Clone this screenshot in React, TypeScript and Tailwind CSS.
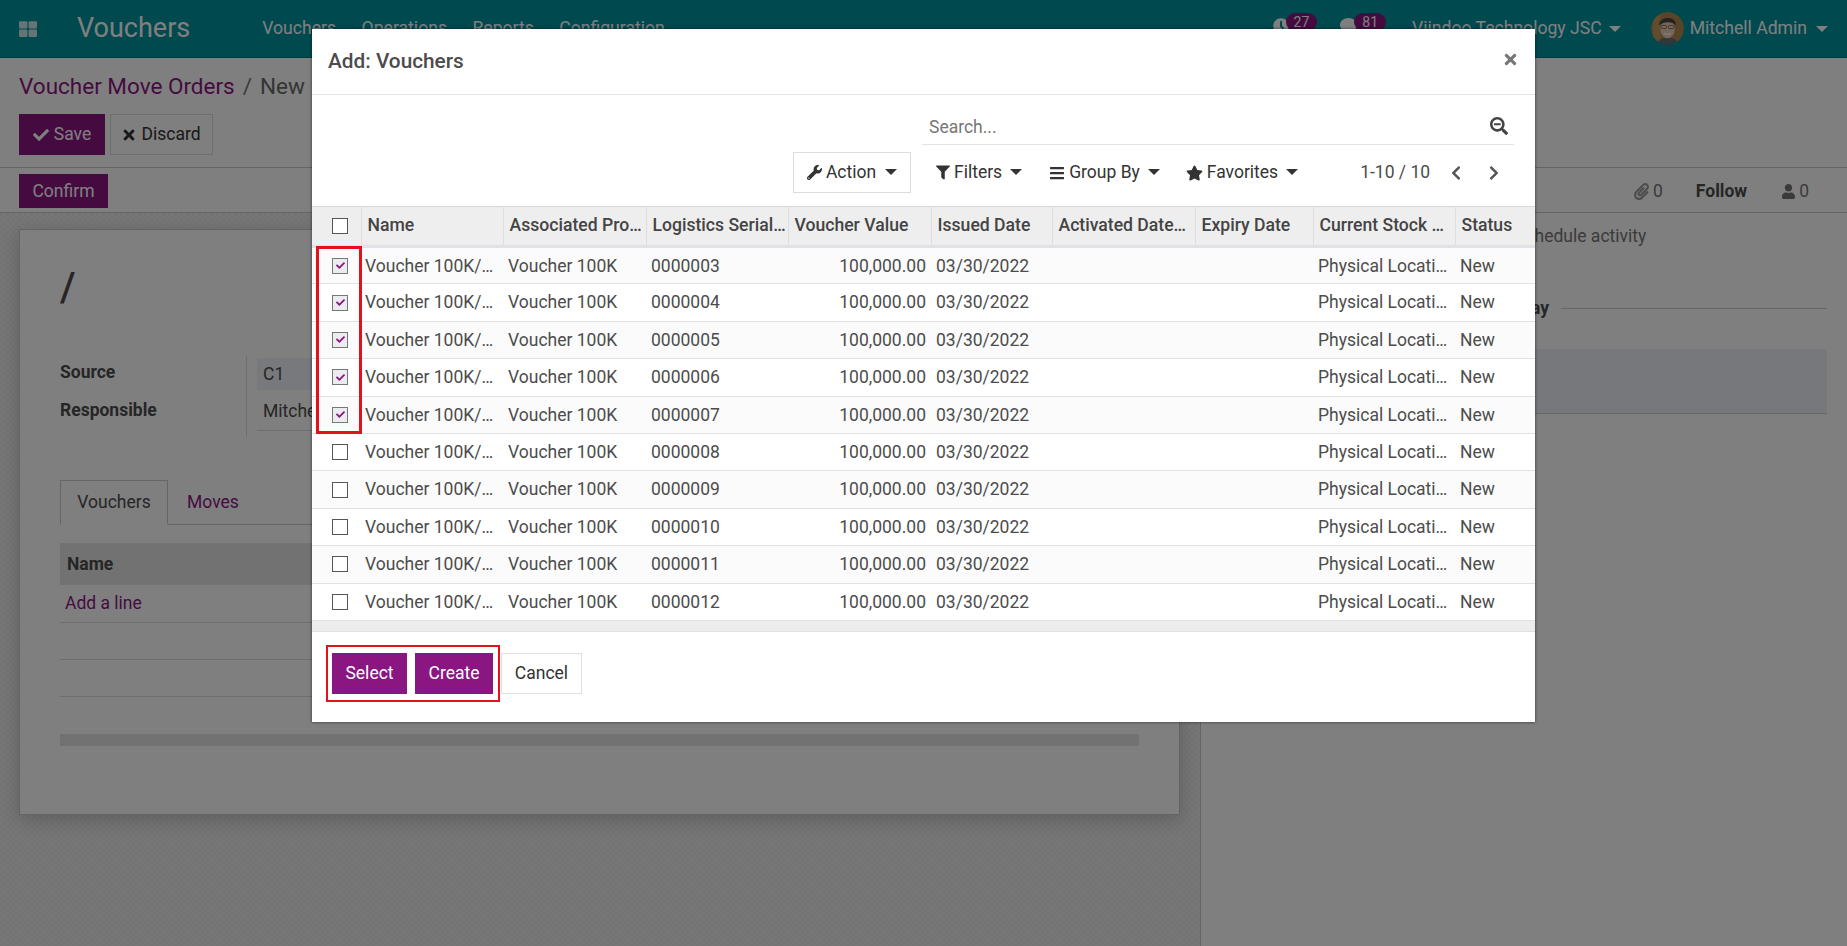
import {
  FaBars,
  FaCheck,
  FaChevronLeft,
  FaChevronRight,
  FaClock,
  FaComment,
  FaFilter,
  FaPaperclip,
  FaSearchMinus,
  FaStar,
  FaThLarge,
  FaTimes,
  FaUser,
  FaWrench,
} from "react-icons/fa";

const serials = ["0000003", "0000004", "0000005", "0000006", "0000007", "0000008", "0000009", "0000010", "0000011", "0000012"];

const columns = [
  { label: "Name", width: "w-[142px]" },
  { label: "Associated Pro…", width: "w-[143px]" },
  { label: "Logistics Serial…", width: "w-[142px]" },
  { label: "Voucher Value", width: "w-[143px]" },
  { label: "Issued Date", width: "w-[121px]" },
  { label: "Activated Date…", width: "w-[143px]" },
  { label: "Expiry Date", width: "w-[118px]" },
  { label: "Current Stock …", width: "w-[142px]" },
  { label: "Status", width: "w-[80px]" },
];

function Caret({ className = "" }: { className?: string }) {
  return <span className={"inline-block border-x-[6px] border-t-[6px] border-x-transparent border-t-current " + className} />;
}

function Avatar() {
  return (
    <svg viewBox="0 0 32 32" className="w-[33px] h-[33px] shrink-0 rounded-full">
      <circle cx="16" cy="16" r="16" fill="#b08a50" />
      <path d="M2 8 L9 2 L9 30 L2 24 Z" fill="#c29a5c" />
      <path d="M5 32 C7 26 12 25 16 25 C21 25 25 26 27 32 Z" fill="#5c7074" />
      <ellipse cx="16" cy="16.5" rx="7" ry="9" fill="#eccdb4" />
      <path d="M8 13 C7 4 25 3 24 13 C21 9 12 9 8 13 Z" fill="#4a423a" />
      <rect x="10" y="13" width="5" height="3" rx="0.8" fill="none" stroke="#5a5048" strokeWidth="0.7" />
      <rect x="17" y="13" width="5" height="3" rx="0.8" fill="none" stroke="#5a5048" strokeWidth="0.7" />
      <path d="M12.5 20.5 C14 22 18 22 19.5 20.5" fill="none" stroke="#ffffff" strokeWidth="1" />
    </svg>
  );
}

function Navbar() {
  return (
    <header className="h-[58px] shrink-0 flex items-center bg-[#00939f] text-white text-[17.6px] border-b border-[#007a85]">
      <FaThLarge className="ml-[19px] w-[18px] h-[18px] opacity-80" />
      <span className="ml-[40px] text-[27px] leading-none">Vouchers</span>
      <nav className="ml-[72px] flex gap-[25.5px]">
        <span>Vouchers</span>
        <span>Operations</span>
        <span>Reports</span>
        <span>Configuration</span>
      </nav>
      <div className="ml-auto flex items-center pr-[19px]">
        <FaClock className="w-[16px] h-[16px] -mt-[6px]" />
        <span className="-mt-[14px] -ml-[3px] px-[8px] rounded-full bg-[#8a1682] text-[14px] leading-[18px]">27</span>
        <FaComment className="ml-[23px] w-[17px] h-[17px] -mt-[6px]" />
        <span className="-mt-[14px] -ml-[3px] px-[8px] rounded-full bg-[#8a1682] text-[14px] leading-[18px]">81</span>
        <span className="ml-[26px]">Viindoo Technology JSC</span>
        <Caret className="ml-[7px]" />
        <span className="ml-[30px]"><Avatar /></span>
        <span className="ml-[6px]">Mitchell Admin</span>
        <Caret className="ml-[9px]" />
      </div>
    </header>
  );
}

function ControlPanel() {
  return (
    <div className="h-[110px] shrink-0 px-[19px] pt-[14px] border-b border-[#c8c8c8] text-[17.5px]">
      <div className="h-[30px] flex items-center text-[22.5px] text-[#6a6a6a]">
        <span className="text-[#8a1682]">Voucher Move Orders</span>
        <span className="mx-[8px] text-[#777]">/</span>
        <span>New</span>
      </div>
      <div className="mt-[12px] flex gap-[5px]">
        <button className="h-[41px] w-[86px] flex items-center justify-center gap-[5px] bg-[#8a1682] text-white">
          <FaCheck className="w-[16px] h-[16px]" />
          Save
        </button>
        <button className="h-[41px] w-[103px] flex items-center justify-center gap-[5px] border border-[#ddd] text-[#333]">
          <FaTimes className="w-[14px] h-[16px]" />
          Discard
        </button>
      </div>
    </div>
  );
}

function Sheet() {
  return (
    <div className="mx-[19px] mt-[16px] w-[1161px] h-[586px] bg-white border border-[#c8c8c8] shadow-[0_5px_18px_rgba(0,0,0,0.2)] text-[17.5px] text-[#4c4c4c]">
      <div className="ml-[40px] mt-[32px] h-[52px] text-[40px] leading-[52px] font-medium">/</div>
      <div className="ml-[40px] mt-[42px] flex">
        <div className="w-[187px] font-bold text-[#4c4c4c] border-r border-[#ddd] h-[81px]">
          <div className="h-[32px] flex items-center">Source</div>
          <div className="mt-[6px] h-[32px] flex items-center">Responsible</div>
        </div>
        <div className="ml-[10px] mt-[2px] flex-1 mr-[40px]">
          <div className="h-[32px] flex items-center pl-[6px] bg-[#f0f3fa]">C1</div>
          <div className="mt-[3px] h-[38px] flex items-center pl-[6px] border-b border-[#ddd]">Mitchell Admin</div>
        </div>
      </div>
      <div className="mx-[40px] mt-[43px] h-[45px] flex border-b border-[#ccc]">
        <div className="w-[108px] h-[45px] flex items-center justify-center border border-b-white border-[#ccc]">Vouchers</div>
        <div className="ml-[19px] flex items-center text-[#8a1682]">Moves</div>
      </div>
      <div className="mx-[40px] mt-[18px]">
        <div className="h-[42px] flex items-center pl-[7px] font-bold bg-[#e4e4e4]">Name</div>
        <div className="h-[38px] flex items-center pl-[5px] text-[#8a1682] border-b border-[#ddd]">Add a line</div>
        <div className="h-[37px] border-b border-[#ddd]" />
        <div className="h-[37px] border-b border-[#ddd]" />
        <div className="mt-[37px] h-[12px] bg-[#e4e4e4]" />
      </div>
    </div>
  );
}

function Chatter() {
  return (
    <aside className="flex-1 border-l border-[#c8c8c8] bg-white text-[17.5px] text-[#4c4c4c] relative">
      <div className="absolute right-[38px] -top-[35px] flex items-center">
        <FaPaperclip className="w-[15px] h-[17px] text-[#999]" />
        <span className="ml-[4px] text-[#777]">0</span>
        <span className="ml-[33px] font-bold">Follow</span>
        <FaUser className="ml-[35px] w-[13px] h-[15px] text-[#777]" />
        <span className="ml-[4px] text-[#777]">0</span>
      </div>
      <div className="ml-[314px] mt-[10px] text-[#777]">Schedule activity</div>
      <div className="ml-[301px] mt-[46px] mr-[20px] flex items-center gap-[12px] font-bold">
        <span>Today</span>
        <span className="flex-1 border-t border-[#ccc]" />
      </div>
      <div className="mt-[27px] mr-[20px] h-[65px] bg-[#eef0f6] border-b border-[#ccc]" />
    </aside>
  );
}

function VoucherCheckbox({ checked = false }: { checked?: boolean }) {
  return (
    <span className={"ml-[20px] w-[16px] h-[16px] flex items-center justify-center border " + (checked ? "bg-[#ecebef] border-[#777]" : "bg-white border-[#555]")}>
      {checked && <FaCheck className="w-[9px] h-[9px] text-[#8a1682]" />}
    </span>
  );
}

function VoucherDialog() {
  return (
    <div className="absolute left-[312px] top-[29px] w-[1223px] h-[693px] flex flex-col bg-white text-[17.5px] text-[#4c4c4c] shadow-[0_0_3px_rgba(0,0,0,0.6)]">
      <div className="h-[66px] shrink-0 flex items-center justify-between pl-[16px] pr-[17px] pt-[1px] border-b border-[#e4e4e4]">
        <span className="text-[20.8px] font-medium">Add: Vouchers</span>
        <FaTimes className="w-[15px] h-[17px] text-[#777] -mt-[5px]" />
      </div>

      <div className="h-[111px] shrink-0">
        <div className="ml-[610px] w-[592px] h-[50px] flex items-center justify-between pl-[7px] pr-[6px] pt-[15px] border-b border-[#e4e4e4]">
          <span className="text-[#777]">Search...</span>
          <FaSearchMinus className="w-[18px] h-[18px] -mt-[3px] text-[#444]" />
        </div>
        <div className="mt-[7px] flex items-center text-[#333]">
          <button className="ml-[481px] w-[118px] h-[41px] flex items-center justify-center border border-[#ddd]">
            <FaWrench className="w-[15px] h-[15px] mr-[4px]" />
            Action
            <Caret className="ml-[9px] -mt-[2px]" />
          </button>
          <FaFilter className="ml-[25px] w-[14px] h-[15px] mr-[4px]" />
          <span>Filters</span>
          <Caret className="ml-[8px] -mt-[2px]" />
          <FaBars className="ml-[27px] w-[16px] h-[16px] mr-[4px]" />
          <span>Group By</span>
          <Caret className="ml-[8px] -mt-[2px]" />
          <FaStar className="ml-[26px] w-[17px] h-[16px] mr-[4px]" />
          <span>Favorites</span>
          <Caret className="ml-[8px] -mt-[2px]" />
          <span className="ml-[62px] text-[#4c4c4c]">1-10 / 10</span>
          <FaChevronLeft className="ml-[20px] w-[12px] h-[16px] text-[#555]" />
          <FaChevronRight className="ml-[26px] w-[12px] h-[16px] text-[#555]" />
        </div>
      </div>

      <table className="w-full table-fixed border-collapse">
        <colgroup>
          <col className="w-[49px]" />
          {columns.map(c => (
            <col key={c.label} className={c.width} />
          ))}
        </colgroup>
        <thead>
          <tr className="h-[40px] bg-[#eeeeee] border-t border-[#d8d8d8] border-b-[3px] border-b-[#e2e2e6]">
            <th className="p-0 border-r border-[#dedede]">
              <VoucherCheckbox />
            </th>
            {columns.map(c => (
              <th key={c.label} className="pl-[6px] pr-0 pb-[2px] text-left font-medium text-[17.6px] text-[#444] whitespace-nowrap border-r border-[#dedede] last:border-r-0">
                {c.label}
              </th>
            ))}
          </tr>
        </thead>
        <tbody>
          {serials.map((serial, i) => (
            <tr key={serial} className={"h-[37.4px] border-b border-[#dee2e6] " + (i % 2 === 0 ? "bg-[#fbfbfb]" : "bg-white")}>
              <td className="p-0">
                <VoucherCheckbox checked={i < 5} />
              </td>
              <td className="pl-[4px] whitespace-nowrap">Voucher 100K/…</td>
              <td className="pl-[5px] whitespace-nowrap">Voucher 100K</td>
              <td className="pl-[5px]">{serial}</td>
              <td className="pr-[5px] text-right">100,000.00</td>
              <td className="pl-[5px]">03/30/2022</td>
              <td />
              <td />
              <td className="pl-[5px] whitespace-nowrap">Physical Locati…</td>
              <td className="pl-[5px]">New</td>
            </tr>
          ))}
        </tbody>
      </table>
      <div className="h-[11px] shrink-0 bg-[#ededed] border-b border-[#e0e0e0]" />

      <div className="relative flex-1 flex items-start pl-[20px] pt-[21px] gap-[8px]">
        <button className="w-[75px] h-[41px] bg-[#8a1682] text-white">Select</button>
        <button className="w-[78px] h-[41px] bg-[#8a1682] text-white">Create</button>
        <button className="w-[81px] h-[41px] border border-[#e0e0e0] text-[#333]">Cancel</button>
        <div className="absolute left-[14px] top-[13px] w-[174px] h-[57px] border-2 border-[#e5101c]" />
      </div>

      <div className="absolute left-[4px] top-[217px] w-[46px] h-[188px] border-[3px] border-[#e5101c]" />
    </div>
  );
}

export default function App() {
  return (
    <div className="relative h-screen overflow-hidden flex flex-col bg-white font-['Roboto',sans-serif]">
      <Navbar />
      <ControlPanel />
      <div className="h-[45px] shrink-0 flex items-start pl-[19px] pt-[6px] border-b border-[#c8c8c8]">
        <button className="w-[89px] h-[34px] bg-[#8a1682] text-white text-[17.5px]">Confirm</button>
      </div>
      <main className="flex-1 flex min-h-0">
        <div className="w-[1200px] shrink-0 bg-[repeating-conic-gradient(#eeeeee_0_25%,#e8e8e8_0_50%)] bg-[length:6px_6px] overflow-hidden">
          <Sheet />
        </div>
        <Chatter />
      </main>
      <div className="absolute inset-0 bg-black/50" />
      <VoucherDialog />
    </div>
  );
}
